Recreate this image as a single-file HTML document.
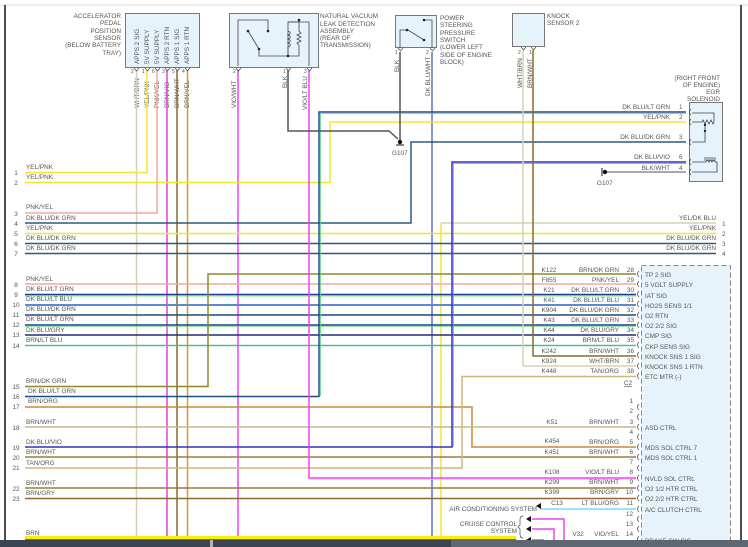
<!DOCTYPE html>
<html><head><meta charset="utf-8"><style>
html,body{margin:0;padding:0;background:#fff;width:748px;height:547px;overflow:hidden}
svg{display:block}
text{font-family:"Liberation Sans",sans-serif;font-size:6.4px;fill:#555}
</style></head><body>
<svg width="748" height="547" viewBox="0 0 748 547" xmlns="http://www.w3.org/2000/svg">
<rect width="748" height="547" fill="#fff"/>
<line x1="0" y1="5" x2="748" y2="5" stroke="#ddd" stroke-width="1"/>
<line x1="5" y1="5" x2="5" y2="540" stroke="#111" stroke-width="1.5"/>
<line x1="741" y1="5" x2="741" y2="540" stroke="#111" stroke-width="1.5"/>

<!-- boxes -->
<rect x="125.5" y="13.5" width="74" height="54" fill="#e6f3fb" stroke="#777"/>
<rect x="229.5" y="13.5" width="89" height="54" fill="#e6f3fb" stroke="#777"/>
<rect x="395.5" y="15.5" width="41" height="32" fill="#e6f3fb" stroke="#777"/>
<rect x="512.5" y="13.5" width="32" height="33" fill="#e6f3fb" stroke="#777"/>
<rect x="689.5" y="102.5" width="33" height="79" fill="#e6f3fb" stroke="#777"/>
<rect x="641.5" y="265.5" width="89" height="290" fill="#e6f3fb" stroke="#888" stroke-dasharray="5,3"/>

<!-- APPS labels -->
<g text-anchor="end">
<text x="121" y="18">ACCELERATOR</text><text x="121" y="25">PEDAL</text><text x="121" y="33">POSITION</text><text x="121" y="40">SENSOR</text><text x="121" y="47">(BELOW BATTERY</text><text x="121" y="55">TRAY)</text>
</g>
<g>
<text transform="translate(139,64) rotate(-90)">APPS 2 SIG</text>
<text transform="translate(149,64) rotate(-90)">5V SUPPLY</text>
<text transform="translate(159,64) rotate(-90)">5V SUPPLY</text>
<text transform="translate(169,64) rotate(-90)">APPS 2 RTN</text>
<text transform="translate(179,64) rotate(-90)">APPS 1 SIG</text>
<text transform="translate(189,64) rotate(-90)">APPS 1 RTN</text>
</g>
<g font-size="5">
<text x="131" y="73" style="font-size:5px">2</text><text x="142" y="73" style="font-size:5px">1</text><text x="152" y="73" style="font-size:5px">6</text><text x="162" y="73" style="font-size:5px">3</text><text x="172" y="73" style="font-size:5px">5</text><text x="182" y="73" style="font-size:5px">4</text>
</g>
<g>
<text transform="translate(139,108) rotate(-90)">WHT/BRN</text>
<text transform="translate(149,108) rotate(-90)">YEL/PNK</text>
<text transform="translate(159,108) rotate(-90)">PNK/YEL</text>
<text transform="translate(169,108) rotate(-90)">BRN/VIO</text>
<text transform="translate(179,108) rotate(-90)">BRN/WHT</text>
<text transform="translate(189,108) rotate(-90)">BRN/YEL</text>
</g>

<!-- NVLD -->
<g>
<text x="320" y="18">NATURAL VACUUM</text><text x="320" y="26">LEAK DETECTION</text><text x="320" y="33">ASSEMBLY</text><text x="320" y="40">(REAR OF</text><text x="320" y="47">TRANSMISSION)</text>
</g>
<g fill="none" stroke="#444" stroke-width="0.8">
<path d="M238,66 V20 H268 V31"/>
<path d="M248,31 L259,49 V56 H288 V22 H309 V66"/>
<path d="M288,22 H299"/>
<path d="M288,31 c3,1 3,3 0,4 c3,1 3,3 0,4 c3,1 3,3 0,4 c3,1 3,3 0,4 V56"/>
<path d="M299,20 V31 l2,2 l-4,2 l4,2 l-4,2 l4,2 l-4,2 l2,2 V56 H288"/>
</g>
<g fill="#222"><circle cx="268" cy="31" r="1.3"/><circle cx="248" cy="31" r="1.3"/><circle cx="259" cy="49" r="1.3"/><circle cx="299" cy="20" r="1.3"/><circle cx="288" cy="56" r="1.3"/></g>
<text transform="translate(236,108) rotate(-90)">VIO/WHT</text>
<text transform="translate(287,88) rotate(-90)">BLK</text>
<text transform="translate(307,110) rotate(-90)">VIO/LT BLU</text>
<text x="233" y="73" style="font-size:5px">2</text><text x="283" y="73" style="font-size:5px">1</text><text x="304" y="73" style="font-size:5px">3</text>

<!-- PS switch -->
<g>
<text x="440" y="20">POWER</text><text x="440" y="27">STEERING</text><text x="440" y="35">PRESSURE</text><text x="440" y="42">SWITCH</text><text x="440" y="49">(LOWER LEFT</text><text x="440" y="57">SIDE OF ENGINE</text><text x="440" y="64">BLOCK)</text>
</g>
<g fill="none" stroke="#444" stroke-width="0.8"><path d="M400,48 V30 L408,30 L424,40"/><path d="M424,20 H432 V48"/></g>
<g fill="#222"><circle cx="424" cy="20" r="1.3"/><circle cx="407" cy="30" r="1.3"/><circle cx="424" cy="40" r="1.3"/></g>
<text x="395" y="54" style="font-size:5px">1</text><text x="426" y="54" style="font-size:5px">2</text>
<text transform="translate(399,72) rotate(-90)">BLK</text>
<text transform="translate(430,96) rotate(-90)">DK BLU/WHT</text>

<!-- Knock -->
<text x="547" y="18">KNOCK</text><text x="547" y="25">SENSOR 2</text>
<text x="518" y="54" style="font-size:5px">2</text><text x="529" y="54" style="font-size:5px">1</text>
<text transform="translate(522,88) rotate(-90)">WHT/BRN</text>
<text transform="translate(532,88) rotate(-90)">BRN/WHT</text>

<!-- EGR -->
<g text-anchor="end">
<text x="720" y="80">(RIGHT FRONT</text><text x="720" y="87">OF ENGINE)</text><text x="720" y="94">EGR</text><text x="720" y="101">SOLENOID</text>
<text x="670" y="109">DK BLU/LT GRN</text><text x="670" y="119">YEL/PNK</text><text x="670" y="139">DK BLU/DK GRN</text><text x="670" y="159">DK BLU/VIO</text><text x="670" y="170">BLK/WHT</text>
</g>
<text x="679" y="109">1</text><text x="679" y="119">2</text><text x="679" y="139">3</text><text x="679" y="159">6</text><text x="679" y="170">4</text>
<g fill="none" stroke="#444" stroke-width="0.8">
<path d="M692,122 H702 l1,-2 l2,4 l2,-4 l2,4 l2,-4 l2,4 l1,-2 V113 H692"/>
<path d="M692,142 H705 V125"/>
<path d="M692,162 H706 c1,-2 2,-2 3,0 c1,-2 2,-2 3,0 c1,-2 2,-2 3,0 h2 V172 H692"/>
<path d="M704,158 H716 M704,160 H716"/>
</g>
<circle cx="705" cy="131" r="1.2" fill="#222"/><circle cx="705" cy="125" r="1.2" fill="#222"/>
<text x="597" y="185">G107</text>
<text x="392" y="155">G107</text>

<!-- wires -->
<g fill="none" stroke-width="1.5">
<!-- full verticals -->
<line x1="136.5" y1="70" x2="136.5" y2="540" stroke="#d8cfb5"/>
<line x1="167" y1="70" x2="167" y2="540" stroke="#e040e0"/>
<line x1="177" y1="70" x2="177" y2="540" stroke="#8b6a2e"/>
<line x1="187.5" y1="70" x2="187.5" y2="540" stroke="#c8a030"/>
<line x1="238" y1="70" x2="238" y2="540" stroke="#f040f0"/>
<line x1="432" y1="52" x2="432" y2="540" stroke="#6070c0"/>
<line x1="441" y1="223" x2="441" y2="540" stroke="#f5e52a"/>
<!-- 1,3 -->
<path d="M25,172.5 H147 V70" stroke="#f5e52a"/>
<path d="M25,213 H157 V70" stroke="#f4a9a0"/>
<!-- 2 -->
<path d="M25,182.5 H330 V122 H686" stroke="#f5e52a"/>
<!-- 4 -->
<path d="M25,223 H411 V142 H686" stroke="#2a5a80"/>
<path d="M25,233.5 H716" stroke="#f5e52a"/>
<path d="M25,243.5 H716" stroke="#2a5a80"/>
<path d="M25,253.5 H716" stroke="#2a5a80"/>
<path d="M441,223 H716" stroke="#d8d2a8"/>
<!-- PCM rows -->
<path d="M25,284 H636" stroke="#f4a9a0"/>
<path d="M25,294.5 H636" stroke="#1d3f85"/><path d="M25,296 H636" stroke="#60d080" stroke-width="0.8"/>
<path d="M25,305 H636" stroke="#5a8ad0" stroke-width="2"/>
<path d="M25,315 H636" stroke="#1d4f75"/>
<path d="M25,325 H636" stroke="#1d3f85"/><path d="M25,326.5 H636" stroke="#70e090" stroke-width="0.8"/>
<path d="M25,335 H636" stroke="#1d3070"/>
<path d="M25,345.5 H636" stroke="#50c080"/>
<path d="M25,386.5 H208 V274 H636" stroke="#8a8a2a"/>
<path d="M25,396.5 H319 V112 H686" stroke="#1d4f85"/><path d="M320.5,396 V113.5 H686" stroke="#60d080" stroke-width="0.8"/>
<path d="M25,407 H472 V447 H636" stroke="#c8883a"/>
<path d="M25,427 H636" stroke="#cbb68a"/>
<path d="M25,447 H452 V162 H686" stroke="#3030c0"/><path d="M453.5,447 V163.5 H686" stroke="#e060e0" stroke-width="0.7"/>
<path d="M25,457 H636" stroke="#a07c40"/>
<path d="M25,468 H462 V376.5 H636" stroke="#d6b47c"/>
<path d="M25,488 H636" stroke="#9a7a3a"/>
<path d="M25,498.5 H636" stroke="#8a6a30"/>
<path d="M309,70 V478 H636" stroke="#f040f0"/><path d="M310,479.5 H636" stroke="#80f0f0" stroke-width="0.8"/>
<path d="M541,509 H636" stroke="#70e0f0"/>
<path d="M288,70 V131 H389 L398,139" stroke="#555"/>
<path d="M400,52 V140" stroke="#555"/>
<path d="M523,50 V366 H636" stroke="#d8cfb5"/>
<path d="M533,50 V356 H636" stroke="#8b6a2e"/>
<path d="M607,172 H686" stroke="#555" stroke-width="1"/>
<path d="M532,519 H564 V540" stroke="#f040f0"/>
<path d="M532,529 H554 V540" stroke="#f040f0"/>
<path d="M532,540 H544" stroke="#f040f0"/>
</g>
<!-- grounds -->
<circle cx="400" cy="142" r="2.2" fill="#111"/><path d="M396,145 h8" stroke="#111"/>
<circle cx="605" cy="172" r="2.2" fill="#111"/><path d="M602,168 v8" stroke="#111"/>
<!-- pin hooks top -->
<g fill="none" stroke="#444" stroke-width="0.7">
<path d="M134,68 l2.5,3 l2.5,-3 M145,68 l2.5,3 l2.5,-3 M155,68 l2.5,3 l2.5,-3 M165,68 l2.5,3 l2.5,-3 M175,68 l2.5,3 l2.5,-3 M185,68 l2.5,3 l2.5,-3"/>
<path d="M236,68 l2.5,3 l2.5,-3 M286,68 l2.5,3 l2.5,-3 M307,68 l2.5,3 l2.5,-3"/>
<path d="M398,48 l2.5,3 l2.5,-3 M430,48 l2.5,3 l2.5,-3 M521,47 l2.5,3 l2.5,-3 M531,47 l2.5,3 l2.5,-3"/>
<path d="M691,109 q-3,3 0,6 M691,119 q-3,3 0,6 M691,139 q-3,3 0,6 M691,159 q-3,3 0,6 M691,169 q-3,3 0,6"/>
</g>
<!-- left labels -->
<g>
<text x="26" y="169">YEL/PNK</text><text x="26" y="179">YEL/PNK</text>
<text x="26" y="209">PNK/YEL</text><text x="26" y="220">DK BLU/DK GRN</text><text x="26" y="230">YEL/PNK</text><text x="26" y="240">DK BLU/DK GRN</text><text x="26" y="250">DK BLU/DK GRN</text>
<text x="26" y="281">PNK/YEL</text><text x="26" y="291">DK BLU/LT GRN</text><text x="26" y="301">DK BLU/LT BLU</text><text x="26" y="311">DK BLU/DK GRN</text><text x="26" y="321">DK BLU/LT GRN</text><text x="26" y="332">DK BLU/GRY</text><text x="26" y="342">BRN/LT BLU</text>
<text x="26" y="383">BRN/DK GRN</text><text x="28" y="393">DK BLU/LT GRN</text><text x="28" y="403">BRN/ORG</text><text x="26" y="424">BRN/WHT</text><text x="26" y="444">DK BLU/VIO</text><text x="26" y="454">BRN/WHT</text><text x="26" y="465">TAN/ORG</text><text x="26" y="485">BRN/WHT</text><text x="26" y="495">BRN/GRY</text><text x="26" y="535">BRN</text>
</g>
<g text-anchor="middle">
<text x="16" y="175">1</text><text x="16" y="185">2</text><text x="16" y="216">3</text><text x="16" y="226">4</text><text x="16" y="236">5</text><text x="16" y="246">6</text><text x="16" y="256">7</text>
<text x="16" y="287">8</text><text x="16" y="297">9</text><text x="16" y="307">10</text><text x="16" y="317">11</text><text x="16" y="327">12</text><text x="16" y="337">13</text><text x="16" y="348">14</text>
<text x="16" y="389">15</text><text x="16" y="399">16</text><text x="16" y="409">17</text><text x="16" y="430">18</text><text x="16" y="450">19</text><text x="16" y="460">20</text><text x="16" y="470">21</text><text x="16" y="491">22</text><text x="16" y="501">23</text>
</g>
<!-- right rows 1-4 -->
<g text-anchor="end">
<text x="716" y="220">YEL/DK BLU</text><text x="716" y="230">YEL/PNK</text><text x="716" y="240">DK BLU/DK GRN</text><text x="716" y="250">DK BLU/DK GRN</text>
</g>
<text x="722" y="226">1</text><text x="722" y="236">2</text><text x="722" y="246">3</text><text x="722" y="256">4</text>

<!-- PCM C1 -->
<g text-anchor="middle">
<text x="549" y="272">K122</text><text x="549" y="282">F855</text><text x="549" y="292">K21</text><text x="549" y="302">K41</text><text x="549" y="312">K904</text><text x="549" y="322">K43</text><text x="549" y="332">K44</text><text x="549" y="342">K24</text><text x="549" y="353">K242</text><text x="549" y="363">K924</text><text x="549" y="373">K448</text>
<text x="552" y="443">K454</text><text x="552" y="454">K451</text><text x="552" y="424">K51</text><text x="552" y="474">K108</text><text x="552" y="484">K299</text><text x="552" y="494">K399</text><text x="557" y="505">C13</text><text x="578" y="536">V32</text>
</g>
<g text-anchor="end">
<text x="619" y="272">BRN/DK GRN</text><text x="619" y="282">PNK/YEL</text><text x="619" y="292">DK BLU/LT GRN</text><text x="619" y="302">DK BLU/LT BLU</text><text x="619" y="312">DK BLU/DK GRN</text><text x="619" y="322">DK BLU/LT GRN</text><text x="619" y="332">DK BLU/GRY</text><text x="619" y="342">BRN/LT BLU</text><text x="619" y="353">BRN/WHT</text><text x="619" y="363">WHT/BRN</text><text x="619" y="373">TAN/ORG</text>
<text x="634" y="272">28</text><text x="634" y="282">29</text><text x="634" y="292">30</text><text x="634" y="302">31</text><text x="634" y="312">32</text><text x="634" y="322">33</text><text x="634" y="332">34</text><text x="634" y="342">35</text><text x="634" y="353">36</text><text x="634" y="363">37</text><text x="634" y="373">38</text>
<text x="619" y="424">BRN/WHT</text><text x="619" y="444">BRN/ORG</text><text x="619" y="454">BRN/WHT</text><text x="619" y="474">VIO/LT BLU</text><text x="619" y="484">BRN/WHT</text><text x="619" y="494">BRN/GRY</text><text x="619" y="505">LT BLU/ORG</text><text x="619" y="536">VIO/YEL</text>
<text x="633" y="403">1</text><text x="633" y="413">2</text><text x="633" y="424">3</text><text x="633" y="434">4</text><text x="633" y="444">5</text><text x="633" y="454">6</text><text x="633" y="464">7</text><text x="633" y="474">8</text><text x="633" y="484">9</text><text x="633" y="494">10</text><text x="633" y="505">11</text><text x="633" y="516">12</text><text x="633" y="526">13</text><text x="633" y="536">14</text>
<text x="537" y="511">AIR CONDITIONING SYSTEM</text>
<text x="517" y="526">CRUISE CONTROL</text><text x="517" y="533">SYSTEM</text>
</g>
<text x="624" y="385" text-decoration="underline">C2</text>
<g>
<text x="645" y="277">TP 2 SIG</text><text x="645" y="287">5 VOLT SUPPLY</text><text x="645" y="298">IAT SIG</text><text x="645" y="308">HO2S SENS 1/1</text><text x="645" y="318">O2 RTN</text><text x="645" y="328">O2 2/2 SIG</text><text x="645" y="338">CMP SIG</text><text x="645" y="349">CKP SENS SIG</text><text x="645" y="359">KNOCK SNS 1 SIG</text><text x="645" y="369">KNOCK SNS 1 RTN</text><text x="645" y="379">ETC MTR (-)</text>
<text x="645" y="430">ASD CTRL</text><text x="645" y="450">MDS SOL CTRL 7</text><text x="645" y="460">MDS SOL CTRL 1</text><text x="645" y="481">NVLD SOL CTRL</text><text x="645" y="491">O2 1/2 HTR CTRL</text><text x="645" y="501">O2 2/2 HTR CTRL</text><text x="645" y="512">A/C CLUTCH CTRL</text><text x="645" y="543">BRAKE SW SIG</text>
</g>
<g fill="none" stroke="#444" stroke-width="0.7">
<path d="M639,271 q-3,3 0,6 M639,281 q-3,3 0,6 M639,291 q-3,3 0,6 M639,301 q-3,3 0,6 M639,312 q-3,3 0,6 M639,322 q-3,3 0,6 M639,332 q-3,3 0,6 M639,342 q-3,3 0,6 M639,352 q-3,3 0,6 M639,363 q-3,3 0,6 M639,373 q-3,3 0,6"/>
<path d="M639,404 q-3,3 0,6 M639,414 q-3,3 0,6 M639,424 q-3,3 0,6 M639,434 q-3,3 0,6 M639,444 q-3,3 0,6 M639,454 q-3,3 0,6 M639,465 q-3,3 0,6 M639,475 q-3,3 0,6 M639,485 q-3,3 0,6 M639,495 q-3,3 0,6 M639,506 q-3,3 0,6 M639,516 q-3,3 0,6 M639,526 q-3,3 0,6 M639,536 q-3,3 0,6"/>
<path d="M523,516 q-3,0 -3,4 v5 l-2,2 l2,2 v5 q0,4 3,4"/>
</g>
<g fill="#111"><path d="M536,506 l5,-3 v6 z"/><path d="M526,519 l5,-3 v6 z"/><path d="M526,529 l5,-3 v6 z"/><path d="M526,540 l5,-3 v6 z"/></g>

<!-- bottom -->
<rect x="25" y="536" width="491" height="3.5" fill="#f8f000"/>
<line x1="25" y1="539.5" x2="516" y2="539.5" stroke="#8b6a2e" stroke-width="1"/>
<rect x="0" y="540" width="748" height="7" fill="#3b4252"/>
<rect x="451" y="540" width="297" height="7" fill="#5e6672"/>
<rect x="210" y="540" width="3" height="7" fill="#b0b4ba"/>
</svg>
</body></html>
